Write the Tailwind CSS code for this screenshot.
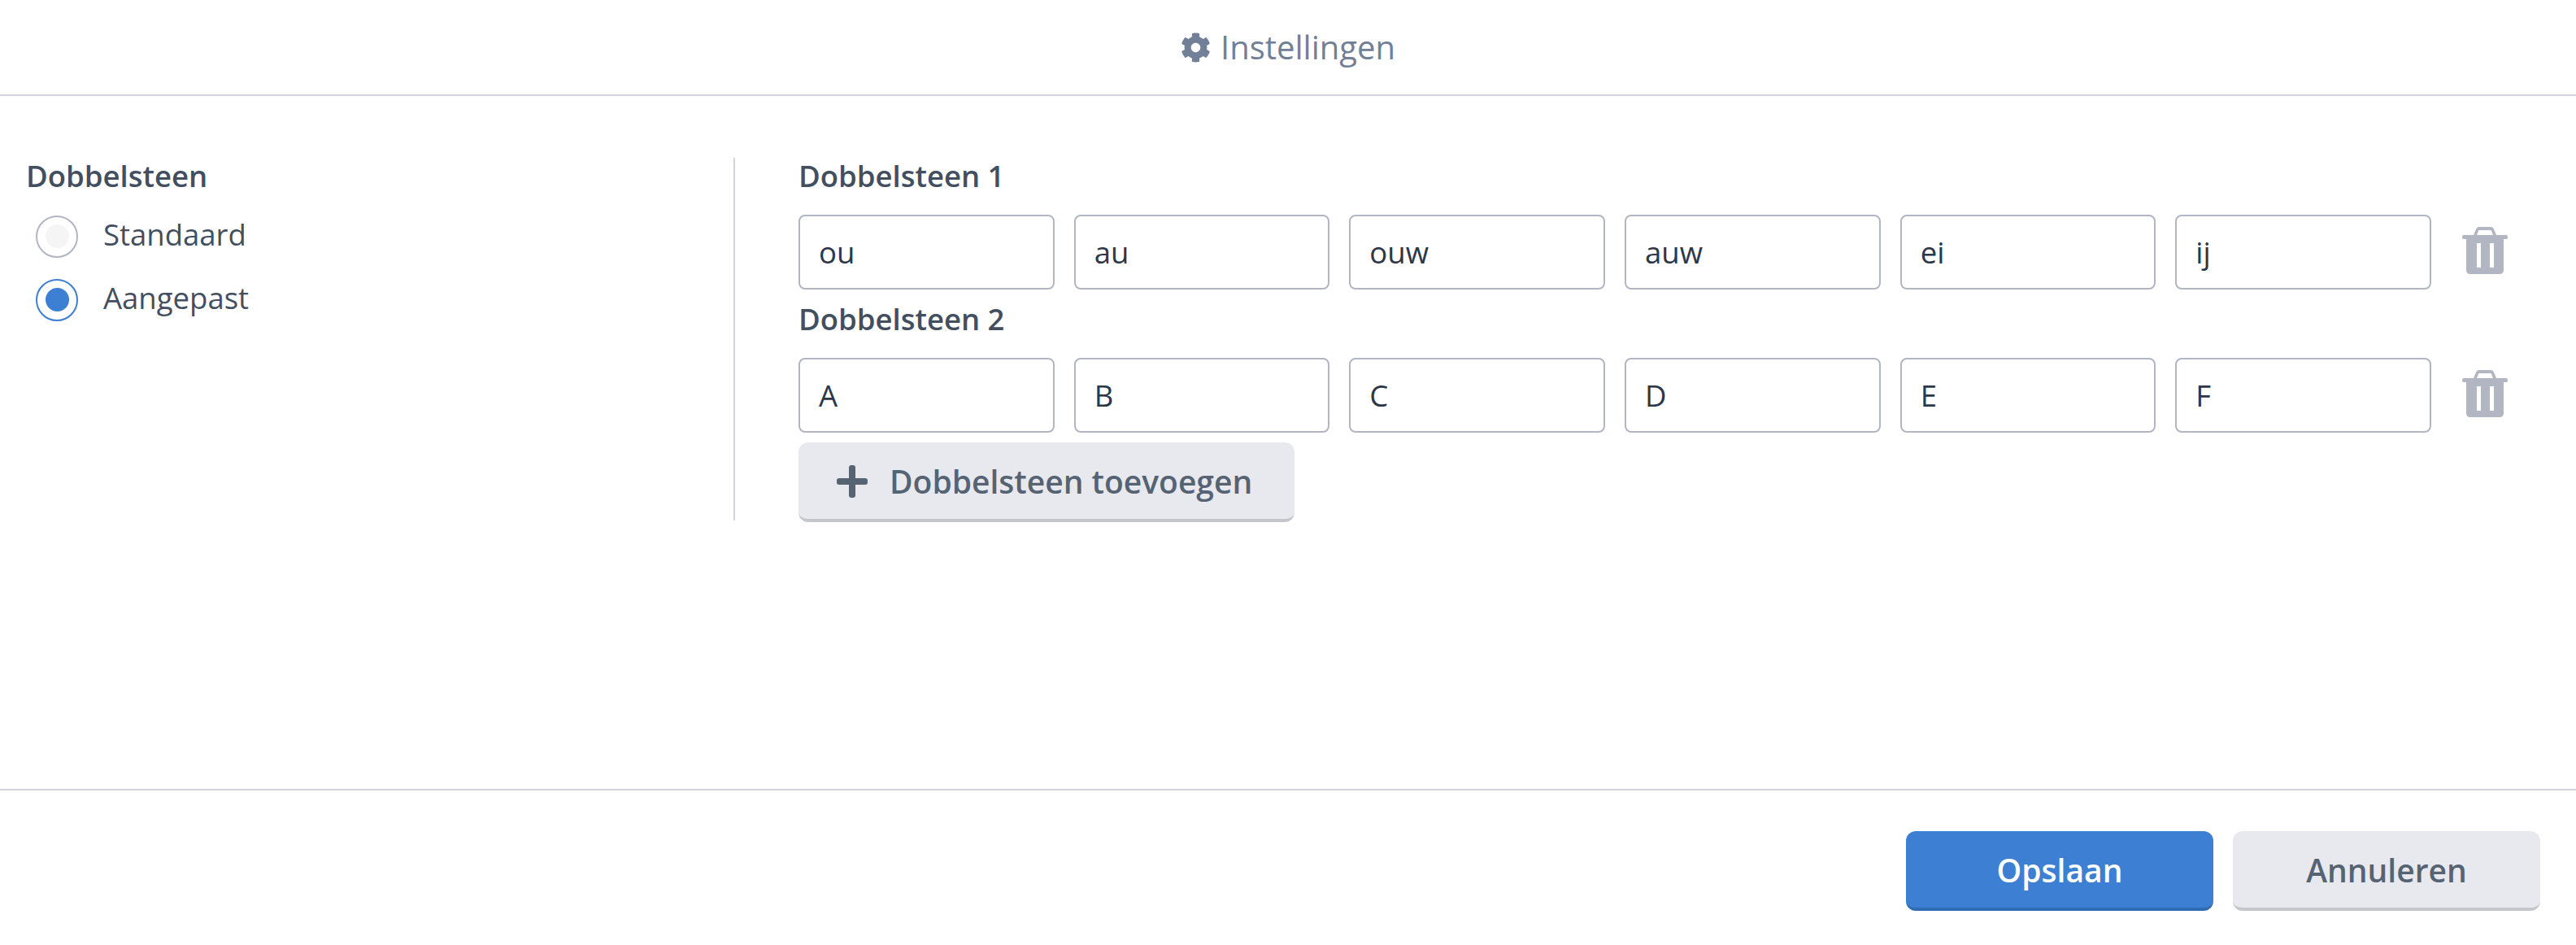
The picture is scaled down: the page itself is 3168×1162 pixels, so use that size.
<!doctype html>
<html lang="nl"><head><meta charset="utf-8"><script src="https://cdn.jsdelivr.net/npm/@tailwindcss/browser@4"></script><title>Instellingen</title></head>
<body class="bg-white font-['Open_Sans',sans-serif] w-[3168px] h-[1162px] overflow-hidden flex flex-col">
<header class="h-[118px] shrink-0 border-b-2 border-[#d3d3e0] flex items-center justify-center gap-[12px] text-[40px] text-[#718096]">
  <svg class="w-[37px] h-[37px]" viewBox="0 0 512 512" fill="#718096"><path d="M487.4 315.7l-42.6-24.6c4.3-23.2 4.3-47 0-70.2l42.6-24.6c4.9-2.8 7.1-8.6 5.5-14-11.1-35.6-30-67.8-54.7-94.6-3.8-4.1-10-5.1-14.8-2.3L380.8 110c-17.9-15.4-38.5-27.3-60.8-35.1V25.8c0-5.6-3.9-10.5-9.4-11.7-36.7-8.2-74.3-7.8-109.2 0-5.5 1.2-9.4 6.1-9.4 11.7V75c-22.2 7.9-42.8 19.8-60.8 35.1L88.7 85.5c-4.9-2.8-11-1.9-14.8 2.3-24.7 26.7-43.6 58.9-54.7 94.6-1.7 5.4.6 11.2 5.5 14L67.3 221c-4.3 23.2-4.3 47 0 70.2l-42.6 24.6c-4.9 2.8-7.1 8.6-5.5 14 11.1 35.6 30 67.8 54.7 94.6 3.8 4.1 10 5.1 14.8 2.3l42.6-24.6c17.9 15.4 38.5 27.3 60.8 35.1v49.2c0 5.6 3.9 10.5 9.4 11.7 36.7 8.2 74.3 7.8 109.2 0 5.5-1.2 9.4-6.1 9.4-11.7v-49.2c22.2-7.9 42.8-19.8 60.8-35.1l42.6 24.6c4.9 2.8 11 1.9 14.8-2.3 24.7-26.7 43.6-58.9 54.7-94.6 1.5-5.5-.7-11.3-5.6-14.1zM256 336c-44.1 0-80-35.9-80-80s35.9-80 80-80 80 35.9 80 80-35.9 80-80 80z"/></svg>
  <span>Instellingen</span>
</header>
<main class="h-[852px] shrink-0 pt-[76px] flex items-start">
  <section class="w-[904px] h-[446px] border-r-2 border-[#d3d3e0] pl-[32px]">
    <h2 class="h-[44px] leading-[44px] text-[36.5px] font-semibold text-[#434f5f] mb-[26px]">Dobbelsteen</h2>
    <div class="flex flex-col gap-[25px] pl-[12px] text-[36.5px] text-[#434f5f]">
      <label class="flex items-center h-[53px] gap-[31px]"><span class="w-[52px] h-[52px] rounded-full border-2 border-[#b1b6c2] flex items-center justify-center"><span class="w-[29px] h-[29px] rounded-full bg-[#f5f5f5]"></span></span><span class="mt-[-4px]">Standaard</span></label>
      <label class="flex items-center h-[53px] gap-[31px]"><span class="w-[52px] h-[52px] rounded-full border-2 border-[#3d7fd3] flex items-center justify-center"><span class="w-[29px] h-[29px] rounded-full bg-[#3d7fd3]"></span></span><span class="mt-[-4px]">Aangepast</span></label>
    </div>
  </section>
  <section class="pl-[78px]">
    <h3 class="h-[44px] leading-[44px] text-[36.5px] font-semibold text-[#434f5f] mb-[26px]">Dobbelsteen 1</h3>
    <div class="flex items-center w-[2102px]">
      <div class="w-[2008px] grid grid-cols-6 gap-[24px] text-[36.5px] text-[#2d3748]">
        <div class="h-[92px] rounded-[8px] border-2 border-[#b1b6c2] px-[23px] flex items-center">ou</div>
        <div class="h-[92px] rounded-[8px] border-2 border-[#b1b6c2] px-[23px] flex items-center">au</div>
        <div class="h-[92px] rounded-[8px] border-2 border-[#b1b6c2] px-[23px] flex items-center">ouw</div>
        <div class="h-[92px] rounded-[8px] border-2 border-[#b1b6c2] px-[23px] flex items-center">auw</div>
        <div class="h-[92px] rounded-[8px] border-2 border-[#b1b6c2] px-[23px] flex items-center">ei</div>
        <div class="h-[92px] rounded-[8px] border-2 border-[#b1b6c2] px-[23px] flex items-center">ij</div>
      </div>
      <svg class="ml-[38px] w-[56px] h-[58px] mt-[-4px]" viewBox="0 0 56 58" fill="#b1b6c2"><path d="M14 10L17 3Q18 0 21 0H35Q38 0 39 3L42 10H38L36 5Q35.5 4 35 4H21Q20.5 4 20 5L18 10Z"/><rect x="0" y="10" width="56" height="5" rx="2"/><path fill-rule="evenodd" d="M5 15H51V53Q51 58 46 58H10Q5 58 5 53ZM18 20V50H23V20ZM34 20V50H39V20Z"/></svg>
    </div>
    <h3 class="h-[44px] leading-[44px] text-[36.5px] font-semibold text-[#434f5f] mt-[14px] mb-[26px]">Dobbelsteen 2</h3>
    <div class="flex items-center w-[2102px]">
      <div class="w-[2008px] grid grid-cols-6 gap-[24px] text-[36.5px] text-[#2d3748]">
        <div class="h-[92px] rounded-[8px] border-2 border-[#b1b6c2] px-[23px] flex items-center">A</div>
        <div class="h-[92px] rounded-[8px] border-2 border-[#b1b6c2] px-[23px] flex items-center">B</div>
        <div class="h-[92px] rounded-[8px] border-2 border-[#b1b6c2] px-[23px] flex items-center">C</div>
        <div class="h-[92px] rounded-[8px] border-2 border-[#b1b6c2] px-[23px] flex items-center">D</div>
        <div class="h-[92px] rounded-[8px] border-2 border-[#b1b6c2] px-[23px] flex items-center">E</div>
        <div class="h-[92px] rounded-[8px] border-2 border-[#b1b6c2] px-[23px] flex items-center">F</div>
      </div>
      <svg class="ml-[38px] w-[56px] h-[58px] mt-[-4px]" viewBox="0 0 56 58" fill="#b1b6c2"><path d="M14 10L17 3Q18 0 21 0H35Q38 0 39 3L42 10H38L36 5Q35.5 4 35 4H21Q20.5 4 20 5L18 10Z"/><rect x="0" y="10" width="56" height="5" rx="2"/><path fill-rule="evenodd" d="M5 15H51V53Q51 58 46 58H10Q5 58 5 53ZM18 20V50H23V20ZM34 20V50H39V20Z"/></svg>
    </div>
    <button class="mt-[12px] w-[610px] h-[98px] rounded-[12px] bg-[#e8e9ee] border-b-4 border-[#c5c6cb] pl-[47px] pt-[2px] flex items-center gap-[27px] text-[39px] font-semibold text-[#566373]">
      <svg class="w-[38px] h-[40px]" viewBox="0 0 38 40" fill="#566373"><rect x="15" y="0" width="8" height="40" rx="3"/><rect x="0" y="16" width="38" height="8" rx="3"/></svg>
      <span>Dobbelsteen toevoegen</span>
    </button>
  </section>
</main>
<footer class="flex-1 border-t-2 border-[#d3d3e0] pt-[50px] pr-[44px] flex justify-end gap-[24px] text-[39px] font-semibold">
  <button class="w-[378px] h-[98px] rounded-[12px] bg-[#3d7fd3] border-b-4 border-[#2f6cb3] pt-[2px] text-white">Opslaan</button>
  <button class="w-[378px] h-[98px] rounded-[12px] bg-[#e8e9ee] border-b-4 border-[#c5c6cb] pt-[2px] text-[#566373]">Annuleren</button>
</footer>
</body></html>
